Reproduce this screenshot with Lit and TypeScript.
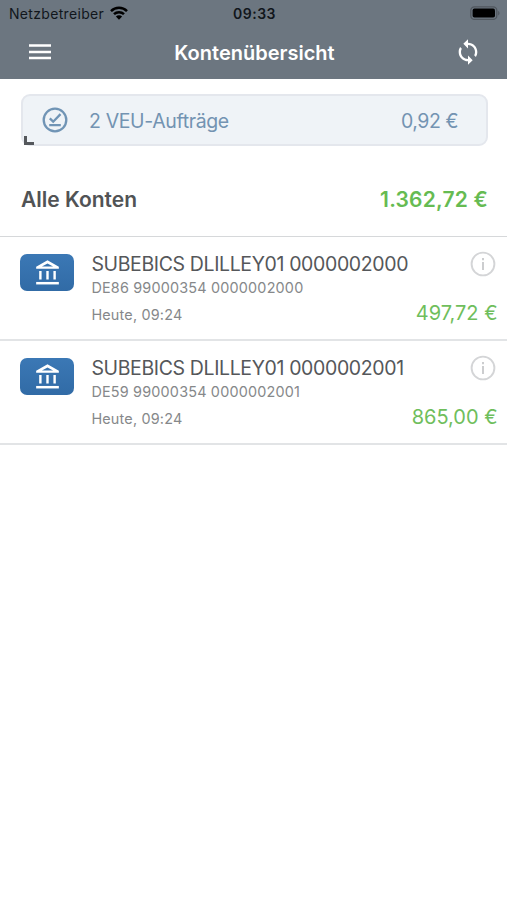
import { LitElement, html, css } from "lit";
import { customElement, property } from "lit/decorators.js";

const font = css`
  :host {
    font-family: Inter, "Liberation Sans", sans-serif;
    font-kerning: normal;
    white-space: nowrap;
  }
  svg {
    display: block;
    flex: none;
  }
`;

@customElement("status-bar")
class StatusBar extends LitElement {
  static styles = [
    font,
    css`
      :host {
        display: grid;
        grid-template-columns: 1fr auto 1fr;
        align-items: center;
        height: 27px;
        padding: 0 7px 0 9px;
        color: #11161c;
        font-size: 14px;
        line-height: 27px;
      }
      .carrier {
        display: flex;
        align-items: center;
        gap: 6px;
        letter-spacing: 0.32px;
      }
      .carrier svg {
        margin-top: -2px;
      }
      .time {
        font-weight: 600;
        letter-spacing: 0.5px;
      }
      .battery {
        justify-self: end;
        margin-top: -1px;
      }
    `,
  ];
  render() {
    return html`
      <div class="carrier">
        <span>Netzbetreiber</span>
        <svg width="18" height="14" viewBox="0 0 18 14">
          <g fill="none" stroke="#000" stroke-width="2.5">
            <path d="M1 5.1a11.4 11.4 0 0 1 16 0" />
            <path d="M4 8.2a7.1 7.1 0 0 1 10 0" />
          </g>
          <path d="M9 13.8 5.9 10.6a4.4 4.4 0 0 1 6.2 0z" fill="#000" />
        </svg>
      </div>
      <span class="time">09:33</span>
      <svg class="battery" width="30" height="14" viewBox="0 0 30 14">
        <rect x="0.8" y="0.8" width="26" height="12.6" rx="3.6" fill="none" stroke="#50575e" stroke-width="1.3" />
        <rect x="2.6" y="2.6" width="22.4" height="9" rx="1.8" fill="#000" />
        <path d="M28.2 5v4.4c1.7-.6 1.7-3.8 0-4.4z" fill="#50575e" />
      </svg>
    `;
  }
}

@customElement("nav-bar")
class NavBar extends LitElement {
  static styles = [
    font,
    css`
      :host {
        display: grid;
        grid-template-columns: 1fr auto 1fr;
        align-items: center;
        height: 52px;
        padding: 0 25px 0 29px;
        color: #fff;
      }
      .title {
        font-size: 20px;
        font-weight: 600;
        line-height: 52px;
        margin-right: 2px;
      }
      .sync {
        justify-self: end;
        margin-top: -2px;
      }
    `,
  ];
  render() {
    return html`
      <svg width="22" height="20" viewBox="0 0 22 20">
        <path d="M0 2.5h22M0 9h22M0 15h22" stroke="#fff" stroke-width="2.4" />
      </svg>
      <span class="title">Kontenübersicht</span>
      <svg class="sync" width="28" height="28" viewBox="0 0 24 24">
        <path
          fill="#fff"
          d="M12 4V1L8 5l4 4V6c3.31 0 6 2.69 6 6 0 1.01-.25 1.97-.7 2.8l1.46 1.46C19.54 15.03 20 13.57 20 12c0-4.42-3.58-8-8-8zm0 14c-3.31 0-6-2.69-6-6 0-1.01.25-1.97.7-2.8L5.24 7.74C4.46 8.97 4 10.43 4 12c0 4.42 3.58 8 8 8v3l4-4-4-4v3z"
        />
      </svg>
    `;
  }
}

@customElement("order-card")
class OrderCard extends LitElement {
  static styles = [
    font,
    css`
      :host {
        display: flex;
        align-items: center;
        position: relative;
        box-sizing: border-box;
        height: 52px;
        margin: 15px 19px 0 21px;
        padding: 0 28px 0 19px;
        border: 2px solid #e4e7ed;
        border-radius: 9px;
        background: #eff3f7;
        color: #7393b2;
        font-size: 19.5px;
        line-height: 28px;
        letter-spacing: -0.36px;
      }
      .label,
      .sum {
        padding-top: 2px;
      }
      .label {
        flex: 1;
        margin-left: 21px;
      }
      .sum {
        letter-spacing: -0.45px;
      }
      .corner {
        position: absolute;
        left: 1px;
        bottom: -1px;
        width: 7px;
        height: 6px;
        border: solid #55585c;
        border-width: 0 0 3px 3px;
      }
    `,
  ];
  render() {
    return html`
      <svg width="26" height="26" viewBox="0 0 26 26">
        <g fill="none" stroke="#7094b5" stroke-width="2.3">
          <circle cx="13" cy="13" r="11.3" />
          <path d="M7.8 11.4l3.4 3.3 7.3-7.6M7.2 18.2h11.6" />
        </g>
      </svg>
      <span class="label">2 VEU-Aufträge</span>
      <span class="sum">0,92 €</span>
      <span class="corner"></span>
    `;
  }
}

@customElement("account-row")
class AccountRow extends LitElement {
  @property() name = "";
  @property() iban = "";
  @property() timestamp = "";
  @property() balance = "";

  static styles = [
    font,
    css`
      :host {
        display: flex;
        box-sizing: border-box;
        height: 104px;
        padding: 14px 9.5px 0 20px;
        border-bottom: 2px solid #e2e4e6;
      }
      .badge {
        display: flex;
        align-items: center;
        justify-content: center;
        flex: none;
        width: 54px;
        height: 37px;
        margin: 3px 17px 0 0.4px;
        border-radius: 7px;
        background: linear-gradient(#3b78b5, #316ba6);
      }
      .badge svg {
        margin-top: -1px;
      }
      .info {
        flex: 1;
        min-width: 0;
      }
      .name {
        font-size: 19.5px;
        line-height: 26px;
        letter-spacing: -0.37px;
        color: #55575a;
      }
      .iban,
      .timestamp {
        font-size: 14.4px;
        line-height: 20px;
        letter-spacing: 0.19px;
        color: #86888a;
      }
      .iban {
        margin-top: 1px;
      }
      .timestamp {
        margin-top: 7px;
      }
      .side {
        display: flex;
        flex-direction: column;
        align-items: flex-end;
      }
      .hint {
        margin-right: 2px;
      }
      .balance {
        margin-top: 23px;
        font-size: 20px;
        line-height: 26px;
        color: #6fbe5c;
      }
    `,
  ];
  render() {
    return html`
      <div class="badge">
        <svg width="25" height="26" viewBox="0 0 26 26" preserveAspectRatio="none">
          <path d="M1.2 9.8V7.7L13 1.2l11.8 6.5v2.1zM7.2 7.6h11.6L13 4.5z" fill="#fff" fill-rule="evenodd" />
          <path d="M5.6 12v8.4M13 12v8.4M20.4 12v8.4" stroke="#fff" stroke-width="2.5" />
          <path d="M1.2 24.2h23.6" stroke="#fff" stroke-width="2.5" />
        </svg>
      </div>
      <div class="info">
        <div class="name">${this.name}</div>
        <div class="iban">${this.iban}</div>
        <div class="timestamp">${this.timestamp}</div>
      </div>
      <div class="side">
        <svg class="hint" width="26" height="26" viewBox="0 0 26 26">
          <circle cx="13" cy="13" r="11.4" fill="none" stroke="#d4d5d7" stroke-width="1.9" />
          <path d="M13 7v2.2M13 11v8" stroke="#cccdcf" stroke-width="2" />
        </svg>
        <div class="balance">${this.balance}</div>
      </div>
    `;
  }
}

@customElement("app-root")
class AppRoot extends LitElement {
  accounts = [
    { name: "SUBEBICS DLILLEY01 0000002000", iban: "DE86 99000354 0000002000", balance: "497,72 €" },
    { name: "SUBEBICS DLILLEY01 0000002001", iban: "DE59 99000354 0000002001", balance: "865,00 €" },
  ];

  static styles = [
    font,
    css`
      :host {
        display: block;
        height: 900px;
        overflow: hidden;
        background: #fff;
      }
      header {
        background: #6c7680;
      }
      .total {
        display: flex;
        justify-content: space-between;
        box-sizing: border-box;
        height: 91px;
        padding: 39px 19px 0 21px;
        border-bottom: 1px solid #d6d8da;
        font-size: 21px;
        font-weight: 600;
        line-height: 30px;
        color: #515355;
      }
      .amount {
        color: #66bb52;
        letter-spacing: 0.2px;
      }
    `,
  ];
  render() {
    return html`
      <header>
        <status-bar></status-bar>
        <nav-bar></nav-bar>
      </header>
      <order-card></order-card>
      <div class="total">
        <span>Alle Konten</span>
        <span class="amount">1.362,72 €</span>
      </div>
      ${this.accounts.map(
        (a) => html`<account-row
          .name=${a.name}
          .iban=${a.iban}
          .timestamp=${"Heute, 09:24"}
          .balance=${a.balance}
        ></account-row>`
      )}
    `;
  }
}
